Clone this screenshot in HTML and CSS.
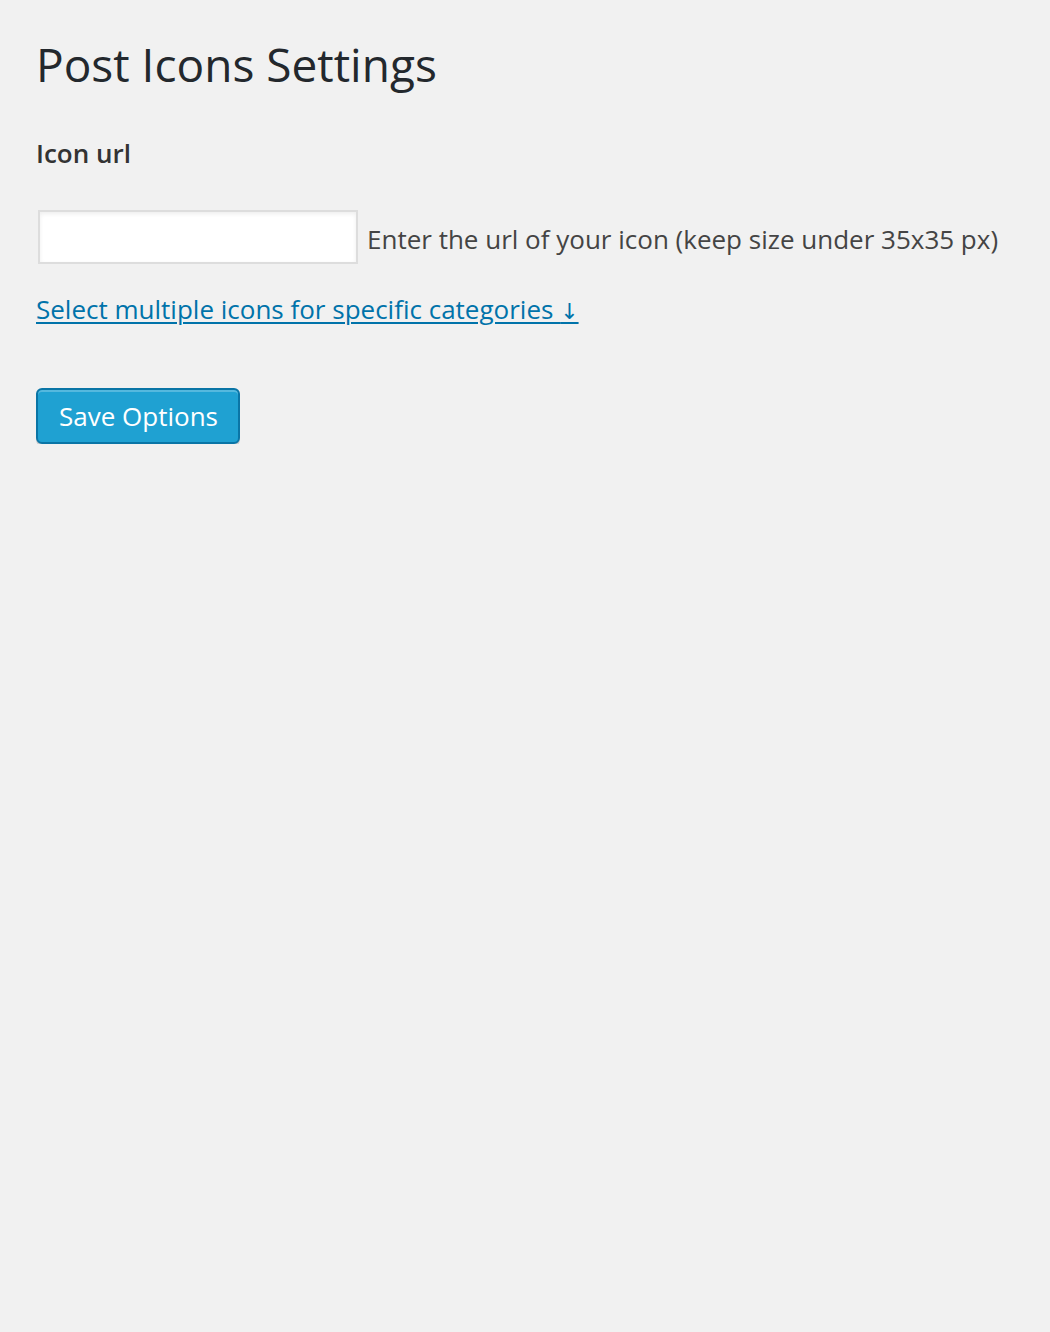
FILE: index.html
```html
<!DOCTYPE html>
<html>
<head>
<meta charset="utf-8">
<link rel="stylesheet" href="styles.css">
</head>
<body>
<div class="wrap">
  <h2 class="title">Post Icons Settings</h2>
  <div class="label">Icon url</div>
  <div class="field-row">
    <input type="text" class="url-input">
    <span class="description">Enter the url of your icon (keep size under 35x35 px)</span>
  </div>
  <a class="more-link" href="#">Select multiple icons for specific categories <span class="arrow">↓</span></a>
  <div class="submit-row">
    <button class="button-primary">Save Options</button>
  </div>
</div>
</body>
</html>
```

FILE: styles.css
```css
html, body {
  margin: 0;
  padding: 0;
  background: #f1f1f1;
}
body {
  font-family: "Open Sans", "Noto Sans", sans-serif;
  color: #444;
}
.wrap {
  padding: 0 36px;
  display: flex;
  flex-direction: column;
  align-items: flex-start;
}
.title {
  margin: 0;
  padding-top: 35px;
  font-size: 46px;
  font-weight: 400;
  line-height: 58px;
  color: #23282d;
}
.label {
  margin-top: 42px;
  font-size: 26px;
  font-weight: 600;
  line-height: 36px;
  color: #333;
}
.field-row {
  margin-top: 39px;
  display: flex;
  align-items: center;
}
.url-input {
  box-sizing: border-box;
  width: 320px;
  height: 54px;
  margin: 0 9px 0 2px;
  border: 2px solid #ddd;
  background: #fff;
  box-shadow: inset 0 2px 4px rgba(0,0,0,0.07);
  font-size: 26px;
  outline: none;
}
.description {
  font-size: 26px;
  line-height: 36px;
  color: #444;
  padding-top: 4px;
}
.more-link {
  margin-top: 25px;
  font-size: 26px;
  line-height: 40px;
  color: #0073aa;
  text-decoration: underline;
  text-decoration-thickness: 2px;
  text-underline-offset: 3px;
}
.arrow {
  font-family: "DejaVu Sans", sans-serif;
  font-size: 22px;
}
.submit-row {
  margin-top: 56px;
}
.button-primary {
  box-sizing: border-box;
  height: 56px;
  padding: 0 20px 2px 21px;
  font-family: "Open Sans", "Noto Sans", sans-serif;
  font-size: 26px;
  line-height: 52px;
  color: #fff;
  background: #1fa1d2;
  border: 2px solid #0a75a6;
  border-radius: 6px;
  box-shadow: inset 0 2px 0 rgba(120,200,230,0.6), 0 2px 0 rgba(0,0,0,0.15);
  cursor: pointer;
}
```
